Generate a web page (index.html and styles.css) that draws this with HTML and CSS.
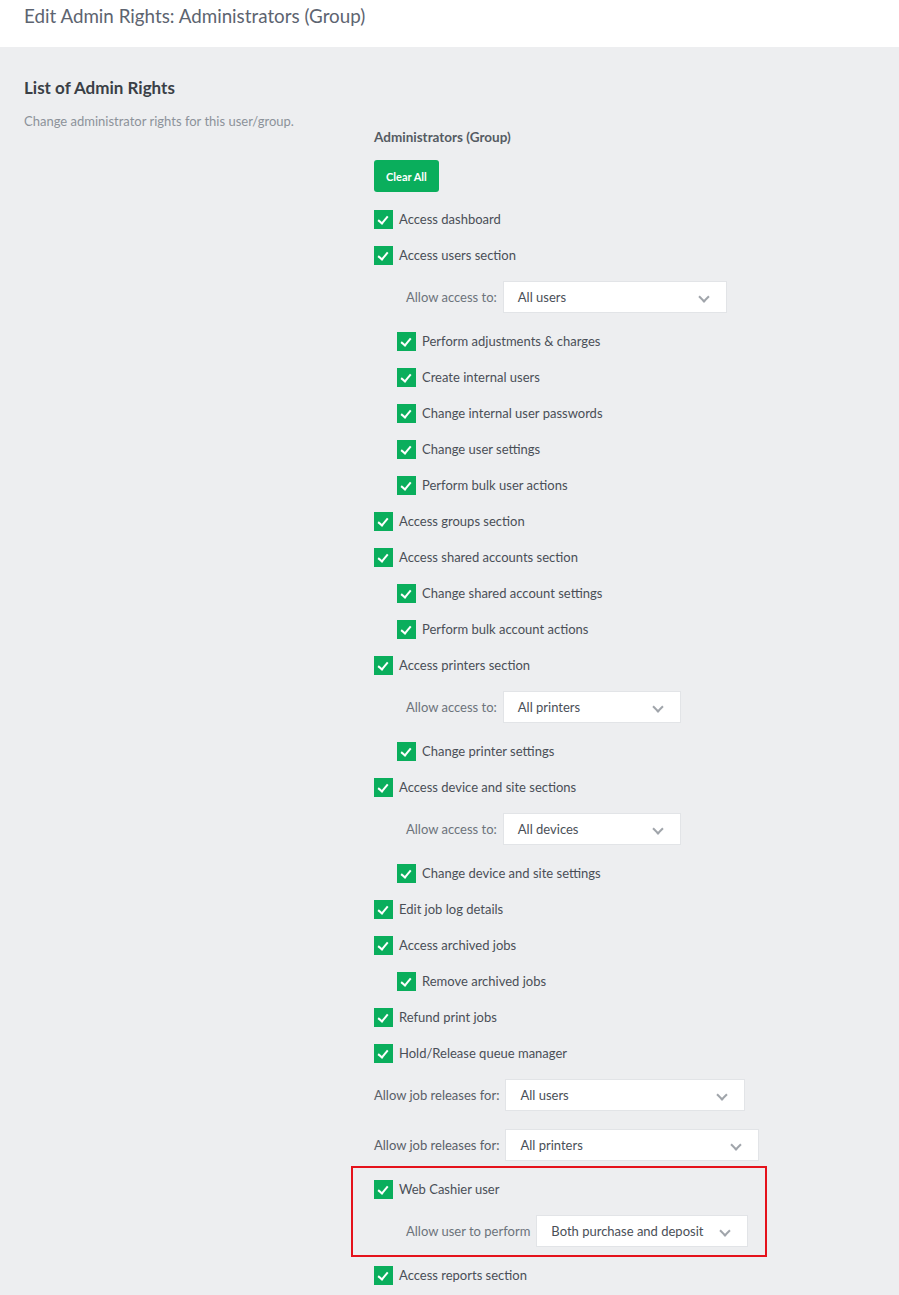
FILE: index.html
```html
<!DOCTYPE html>
<html lang="en">
  <head>
    <meta charset="UTF-8" />
    <title>Edit Admin Rights</title>
    <link rel="stylesheet" href="styles.css">
  </head>
  <body>
    <!-- Page header -->
    <header class="page-header">
      <h1>Edit Admin Rights: Administrators (Group)</h1>
    </header>

    <main class="content">
      <!-- Left: section info -->
      <section class="intro">
        <h2>List of Admin Rights</h2>
        <p>Change administrator rights for this user/group.</p>
      </section>

      <!-- Right: rights list -->
      <section class="rights">
        <h3>Administrators (Group)</h3>
        <button class="btn-clear" type="button">Clear All</button>

        <label class="check"><span class="box"></span>Access dashboard</label>
        <label class="check"><span class="box"></span>Access users section</label>
        <div class="select-row sub">
          <span class="select-label">Allow access to:</span>
          <div class="select w-users">All users<span class="chevron"></span></div>
        </div>
        <label class="check sub"><span class="box"></span>Perform adjustments &amp; charges</label>
        <label class="check sub"><span class="box"></span>Create internal users</label>
        <label class="check sub"><span class="box"></span>Change internal user passwords</label>
        <label class="check sub"><span class="box"></span>Change user settings</label>
        <label class="check sub"><span class="box"></span>Perform bulk user actions</label>
        <label class="check"><span class="box"></span>Access groups section</label>
        <label class="check"><span class="box"></span>Access shared accounts section</label>
        <label class="check sub"><span class="box"></span>Change shared account settings</label>
        <label class="check sub"><span class="box"></span>Perform bulk account actions</label>
        <label class="check"><span class="box"></span>Access printers section</label>
        <div class="select-row sub">
          <span class="select-label">Allow access to:</span>
          <div class="select w-short">All printers<span class="chevron"></span></div>
        </div>
        <label class="check sub"><span class="box"></span>Change printer settings</label>
        <label class="check"><span class="box"></span>Access device and site sections</label>
        <div class="select-row sub">
          <span class="select-label">Allow access to:</span>
          <div class="select w-short">All devices<span class="chevron"></span></div>
        </div>
        <label class="check sub"><span class="box"></span>Change device and site settings</label>
        <label class="check"><span class="box"></span>Edit job log details</label>
        <label class="check"><span class="box"></span>Access archived jobs</label>
        <label class="check sub"><span class="box"></span>Remove archived jobs</label>
        <label class="check"><span class="box"></span>Refund print jobs</label>
        <label class="check"><span class="box"></span>Hold/Release queue manager</label>
        <div class="select-row">
          <span class="select-label dark">Allow job releases for:</span>
          <div class="select w-release-users">All users<span class="chevron"></span></div>
        </div>
        <div class="select-row">
          <span class="select-label dark">Allow job releases for:</span>
          <div class="select w-release-printers">All printers<span class="chevron"></span></div>
        </div>

        <!-- Highlighted block -->
        <div class="highlight">
          <label class="check"><span class="box"></span>Web Cashier user</label>
          <div class="select-row sub">
            <span class="select-label">Allow user to perform</span>
            <div class="select w-cashier">Both purchase and deposit<span class="chevron"></span></div>
          </div>
        </div>

        <label class="check"><span class="box"></span>Access reports section</label>
      </section>
    </main>
  </body>
</html>
```

FILE: styles.css
```css
/* Base */
body {
  margin: 0;
  font-family: Lato, "Noto Sans", Arial, sans-serif;
  font-size: 13px;
  color: #4a4f57;
  background-color: #edeef0;
}
/* Header */
.page-header {
  background: #fff;
  height: 47px;
  padding: 0 24px;
  box-sizing: border-box;
}
.page-header h1 {
  margin: 0;
  padding-top: 4px;
  font-size: 18.8px;
  font-weight: 400;
  color: #5d6470;
}
/* Two columns */
.content {
  display: grid;
  grid-template-columns: 350px 1fr;
  padding: 30px 24px;
}
.intro h2 {
  margin: 0;
  font-size: 17px;
  font-weight: 700;
  color: #3a3f46;
}
.intro p {
  margin: 15px 0 0;
  font-size: 13px;
  color: #8c929a;
}
.rights {
  padding-top: 52px;
}
.rights h3 {
  margin: 0;
  font-size: 13.5px;
  font-weight: 700;
  color: #555b63;
}
.btn-clear {
  display: block;
  margin: 15px 0 9px;
  height: 32px;
  padding: 0 12px;
  border: none;
  border-radius: 3px;
  background-color: #0aae5c;
  color: #fff;
  font-family: inherit;
  font-size: 11px;
  font-weight: 700;
  cursor: pointer;
}
/* Checkbox rows */
.check {
  display: flex;
  align-items: center;
  height: 36px;
  cursor: pointer;
}
.check.sub {
  padding-left: 23px;
}
.box {
  width: 19px;
  height: 19px;
  margin-right: 6px;
  background-color: #0aae5c;
  position: relative;
  flex-shrink: 0;
}
.box::after {
  content: "";
  position: absolute;
  left: 6px;
  top: 4px;
  width: 4px;
  height: 8px;
  border: solid #fff;
  border-width: 0 2px 2px 0;
  transform: rotate(40deg);
}
/* Select rows */
.select-row {
  display: flex;
  align-items: center;
  padding: 8px 0 10px;
}
.select-row.sub {
  padding-left: 32px;
}
.select-label {
  margin-right: 6px;
  color: #6c737b;
}
.select-label.dark {
  color: #5a6068;
}
.select {
  position: relative;
  height: 32px;
  box-sizing: border-box;
  line-height: 30px;
  padding: 0 14px;
  background: #fff;
  border: 1px solid #e2e4e7;
  color: #4a4f57;
}
.chevron {
  position: absolute;
  right: 18px;
  top: 11px;
  width: 6px;
  height: 6px;
  border: solid #a0a5ab;
  border-width: 0 2px 2px 0;
  transform: rotate(45deg);
}
.w-users { width: 224px; }
.w-short { width: 178px; }
.w-release-users { width: 240px; }
.w-release-printers { width: 254px; }
.w-cashier { width: 212px; }
/* Red annotation frame */
.highlight {
  position: relative;
}
.highlight::before {
  content: "";
  position: absolute;
  left: -23px;
  top: -5px;
  width: 416px;
  bottom: 0;
  border: 2px solid #e5121b;
  box-sizing: border-box;
  pointer-events: none;
}
```
